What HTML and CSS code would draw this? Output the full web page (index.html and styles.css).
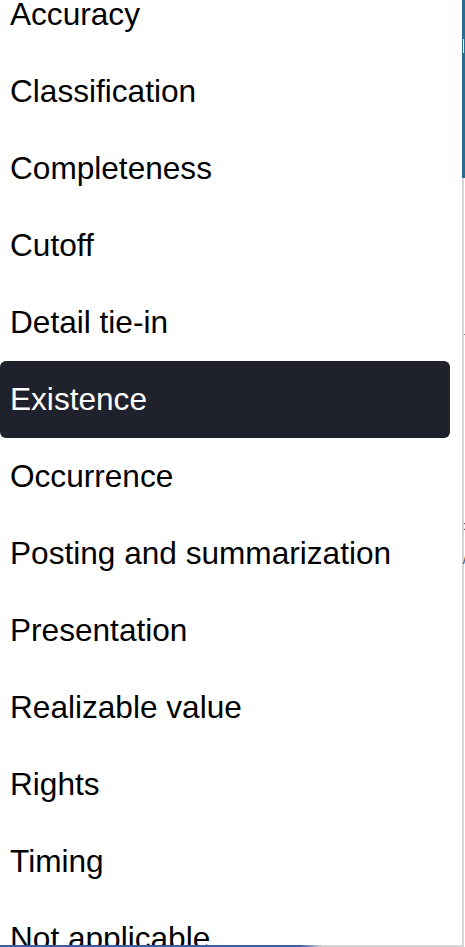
FILE: index.html
```html
<!DOCTYPE html>
<html lang="en">
<head>
<meta charset="utf-8">
<title>Assertion select</title>
<link rel="stylesheet" href="styles.css">
</head>
<body>
<div class="layout">
  <div class="panel">
    <div class="viewport">
      <ul class="options">
        <li class="option">Accuracy</li>
        <li class="option">Classification</li>
        <li class="option">Completeness</li>
        <li class="option">Cutoff</li>
        <li class="option">Detail tie-in</li>
        <li class="option selected">Existence</li>
        <li class="option">Occurrence</li>
        <li class="option">Posting and summarization</li>
        <li class="option">Presentation</li>
        <li class="option">Realizable value</li>
        <li class="option">Rights</li>
        <li class="option">Timing</li>
        <li class="option">Not applicable</li>
      </ul>
    </div>
    <div class="bottom-bar"></div>
  </div>
  <div class="backdrop">
    <div class="backdrop-header"><span class="backdrop-glyph"></span></div>
    <div class="backdrop-body">
      <span class="dash"></span>
      <span class="colon">:</span>
      <span class="slash">/</span>
    </div>
  </div>
</div>
</body>
</html>
```

FILE: styles.css
```css
html, body {
  margin: 0;
  padding: 0;
  background: #ffffff;
}

body {
  font-family: "Liberation Sans", Arial, sans-serif;
  color: #000000;
  overflow: hidden;
}

.layout {
  display: flex;
  width: 465px;
  height: 947px;
  overflow: hidden;
}

.panel {
  width: 462px;
  flex: 0 0 462px;
  display: flex;
  flex-direction: column;
  background: #ffffff;
}

.viewport {
  flex: 1;
  overflow: hidden;
}

.options {
  list-style: none;
  margin: -24px 0 0 0;
  padding: 0;
}

.option {
  height: 77px;
  width: 450px;
  box-sizing: border-box;
  padding-left: 10px;
  display: flex;
  align-items: center;
  font-size: 31.6px;
  white-space: nowrap;
  border-radius: 6px;
}

.option.selected {
  background: #1f222d;
  color: #ffffff;
}

.bottom-bar {
  height: 2px;
  flex: 0 0 2px;
  background: linear-gradient(to right, #3d5ca8 0, #3d5ca8 300px, #d6d6d6 322px, #d6d6d6 100%);
}

.backdrop {
  flex: 1;
  display: flex;
  flex-direction: column;
}

.backdrop-header {
  height: 178px;
  flex: 0 0 178px;
  background: #2a6c92;
  display: flex;
  flex-direction: column;
}

.backdrop-glyph {
  display: block;
  width: 1px;
  height: 14px;
  margin-top: 39px;
  margin-left: 1px;
  background: #e8eef2;
}

.backdrop-body {
  flex: 1;
  border-left: 2px solid #d6d6d6;
  display: flex;
  flex-direction: column;
  font-size: 12px;
  line-height: 1;
  color: #333;
}

.dash {
  display: block;
  height: 1px;
  width: 2px;
  margin-top: 156px;
  background: #7a7f8a;
}

.colon {
  display: block;
  margin-top: 185px;
  margin-left: -1px;
  overflow: hidden;
  width: 2px;
}

.slash {
  display: block;
  margin-top: 22px;
  margin-left: -1px;
  overflow: hidden;
  width: 2px;
}
```
